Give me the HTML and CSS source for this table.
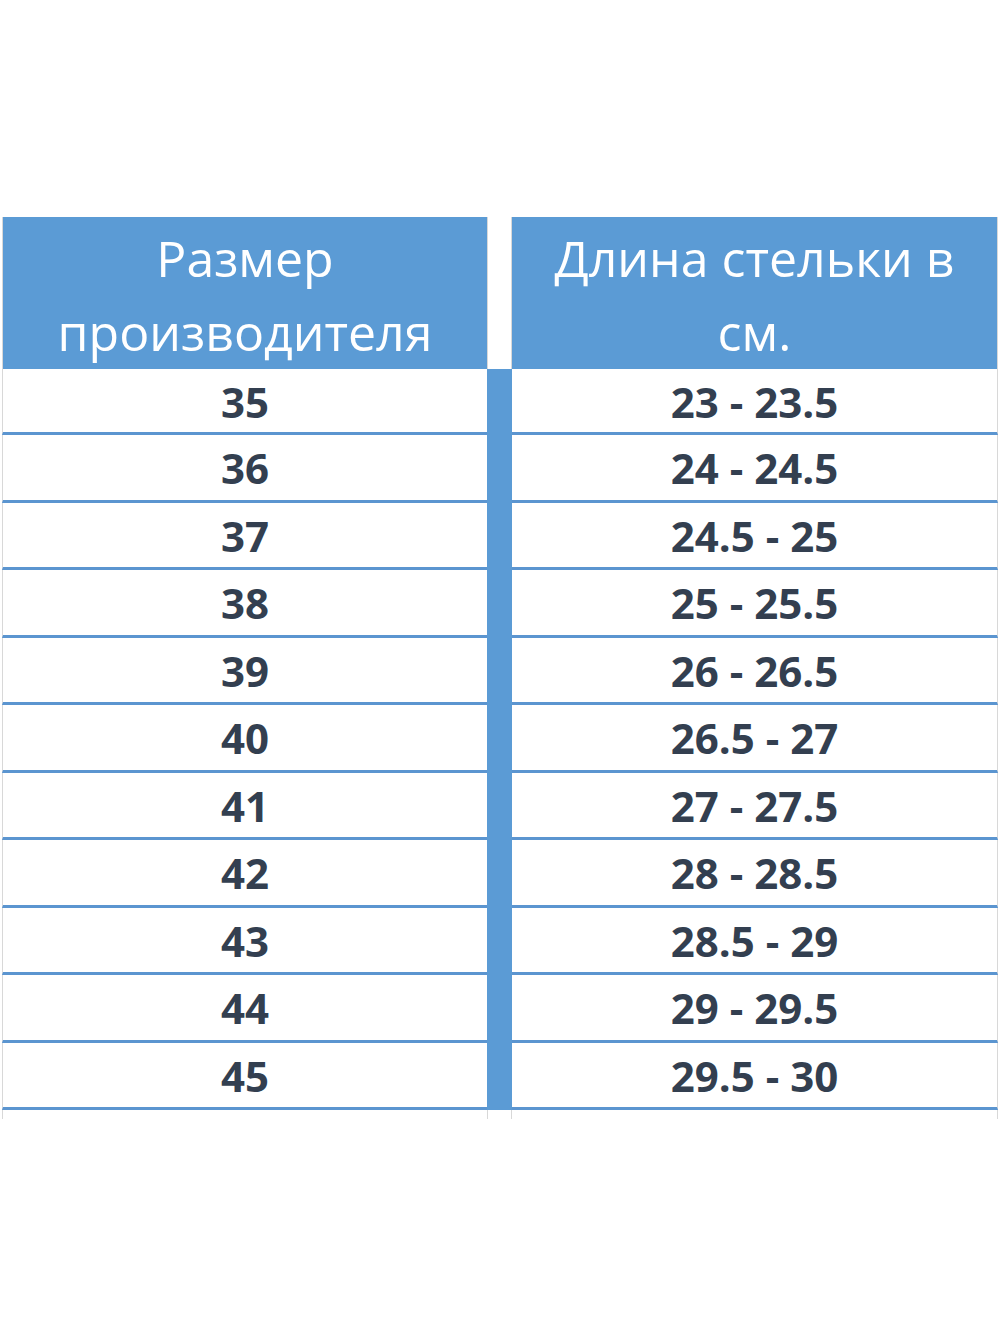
FILE: index.html
```html
<!DOCTYPE html>
<html lang="ru">
<head>
<meta charset="utf-8">
<title>Таблица размеров</title>
<link rel="stylesheet" href="styles.css">
</head>
<body>
<div class="sheet">
  <div class="table">
    <div class="head cell-left">Размер производителя</div>
    <div class="head-gap"></div>
    <div class="head cell-right">Длина стельки в см.</div>

    <div class="cell cell-left first">35</div><div class="gap first"></div><div class="cell cell-right first">23 - 23.5</div>
    <div class="cell cell-left">36</div><div class="gap"></div><div class="cell cell-right">24 - 24.5</div>
    <div class="cell cell-left">37</div><div class="gap"></div><div class="cell cell-right">24.5 - 25</div>
    <div class="cell cell-left">38</div><div class="gap"></div><div class="cell cell-right">25 - 25.5</div>
    <div class="cell cell-left">39</div><div class="gap"></div><div class="cell cell-right">26 - 26.5</div>
    <div class="cell cell-left">40</div><div class="gap"></div><div class="cell cell-right">26.5 - 27</div>
    <div class="cell cell-left">41</div><div class="gap"></div><div class="cell cell-right">27 - 27.5</div>
    <div class="cell cell-left">42</div><div class="gap"></div><div class="cell cell-right">28 - 28.5</div>
    <div class="cell cell-left">43</div><div class="gap"></div><div class="cell cell-right">28.5 - 29</div>
    <div class="cell cell-left">44</div><div class="gap"></div><div class="cell cell-right">29 - 29.5</div>
    <div class="cell cell-left">45</div><div class="gap"></div><div class="cell cell-right">29.5 - 30</div>

    <div class="tail cell-left"></div><div class="tail tail-gap"></div><div class="tail cell-right"></div>
  </div>
</div>
</body>
</html>
```

FILE: styles.css
```css
html, body {
  margin: 0;
  padding: 0;
  background: #ffffff;
}

.sheet {
  width: 1000px;
  height: 1333px;
  padding-top: 217px;
  padding-left: 2px;
  box-sizing: border-box;
}

.table {
  display: grid;
  grid-template-columns: 485px 25px 486px;
  grid-auto-rows: 67.5px;
  grid-template-rows: 152px 66px;
}

.head {
  background: #5b9bd5;
  color: #ffffff;
  font-family: "Open Sans", "Liberation Sans", sans-serif;
  font-size: 50px;
  font-weight: 400;
  line-height: 74px;
  text-align: center;
  display: flex;
  align-items: center;
  justify-content: center;
  padding: 4px 36px 0;
  box-sizing: border-box;
}

.head-gap {
  background: #ffffff;
  border-left: 1px solid #d8d8d8;
  border-right: 1px solid #d8d8d8;
}

.cell {
  background: #ffffff;
  color: #333f50;
  font-family: "Open Sans", "Liberation Sans", sans-serif;
  font-size: 42px;
  font-weight: 700;
  display: flex;
  align-items: center;
  justify-content: center;
  border-bottom: 3px solid #5b95d0;
  box-sizing: border-box;
  padding-top: 1px;
}

.cell-left {
  border-left: 1px solid #d8d8d8;
}

.cell-right {
  border-right: 1px solid #d8d8d8;
}

.gap {
  background: #5b9bd5;
}

.tail {
  height: 9px;
  align-self: start;
}

.tail-gap {
  border-left: 1px solid #d8d8d8;
  border-right: 1px solid #d8d8d8;
  box-sizing: border-box;
}
```
